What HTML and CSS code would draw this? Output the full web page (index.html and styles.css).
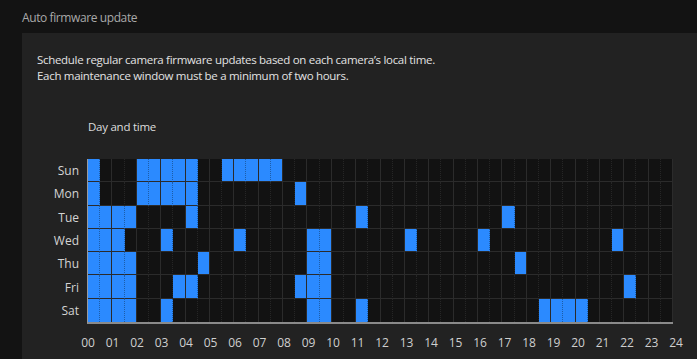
FILE: index.html
```html
<!DOCTYPE html>
<html lang="en">
<head>
    <meta charset="UTF-8">
    <title>Auto firmware update</title>
    <link rel="stylesheet" href="styles.css">
</head>
<body>
    <div class="section-title">Auto firmware update</div>

    <div class="panel">
        <p class="description">
            Schedule regular camera firmware updates based on each camera’s local time.<br>
            Each maintenance window must be a minimum of two hours.
        </p>

        <div class="chart-title">Day and time</div>

        <div class="schedule">
            <div class="day-labels">
                <div>Sun</div>
                <div>Mon</div>
                <div>Tue</div>
                <div>Wed</div>
                <div>Thu</div>
                <div>Fri</div>
                <div>Sat</div>
            </div>
            <div class="grid" id="grid">
                <!-- rows are built by the script below -->
            </div>
        </div>

        <div class="hour-axis" id="hour-axis"></div>
    </div>

    <script>
        // half-hour slots (0 = 00:00-00:30 ... 47 = 23:30-24:00) that are selected
        const windows = [
            [0, 4, 5, 6, 7, 8, 11, 12, 13, 14, 15],          // Sun
            [0, 4, 5, 6, 7, 8, 17],                            // Mon
            [0, 1, 2, 3, 8, 22, 34],                           // Tue
            [0, 1, 2, 6, 12, 18, 19, 26, 32, 43],              // Wed
            [0, 1, 2, 3, 9, 18, 19, 35],                       // Thu
            [0, 1, 2, 3, 7, 8, 17, 18, 19, 44],                // Fri
            [0, 1, 2, 3, 6, 18, 19, 22, 37, 38, 39, 40]        // Sat
        ];

        const grid = document.getElementById('grid');
        windows.forEach((slots) => {
            const row = document.createElement('div');
            row.className = 'grid-row';
            for (let i = 0; i < 48; i++) {
                const cell = document.createElement('div');
                cell.className = 'slot' + (i % 2 === 0 ? ' half' : ' hour');
                if (slots.includes(i)) cell.classList.add('on');
                row.appendChild(cell);
            }
            grid.appendChild(row);
        });

        const axis = document.getElementById('hour-axis');
        for (let h = 0; h <= 24; h++) {
            const label = document.createElement('span');
            label.textContent = String(h).padStart(2, '0');
            axis.appendChild(label);
        }
    </script>
</body>
</html>
```

FILE: styles.css
```css
body {
    margin: 0;
    background: #131313;
    font-family: "Open Sans", "Noto Sans", sans-serif;
    color: #e4e4e4;
    overflow: hidden;
}

.section-title {
    height: 33px;
    line-height: 36px;
    padding-left: 22px;
    font-size: 12px;
    letter-spacing: -0.4px;
    color: #a9a9a9;
}

/* Main panel */
.panel {
    margin-left: 22px;
    background: #222222;
    padding: 19px 0 20px 15px;
}

.description {
    margin: 0;
    font-size: 11.5px;
    letter-spacing: -0.3px;
    line-height: 16px;
    color: #e2e2e2;
}

.chart-title {
    margin-top: 35px;
    margin-left: 51px;
    font-size: 11.5px;
    letter-spacing: -0.25px;
    line-height: 16px;
    color: #dddddd;
}

/* Schedule grid */
.schedule {
    display: flex;
    margin-top: 24px;
    gap: 9px;
}

.day-labels {
    width: 42px;
    display: grid;
    grid-template-rows: repeat(7, 1fr);
    height: 163px;
    font-size: 12px;
    color: #d4d4d4;
}

.day-labels div {
    display: flex;
    align-items: center;
    justify-content: flex-end;
}

.grid {
    width: 585px;
    height: 163px;
    display: grid;
    grid-template-rows: repeat(7, 1fr);
    background: #121212;
    border-left: 1px solid #9a9a9a;
    border-bottom: 2px solid #8a8a8a;
    margin-left: -1px;
}

.grid-row {
    display: grid;
    grid-template-columns: repeat(48, 1fr);
}

.slot {
    border-bottom: 1px solid #2b2b2b;
}

.grid-row:last-child .slot {
    border-bottom: none;
}

.slot.half {
    border-right: 1px dotted #262626;
}

.slot.hour {
    border-right: 1px solid #2b2b2b;
}

.slot.on {
    background: #2b8aff;
}

.slot.on.half {
    border-right-color: #1d5da8;
}

/* Hour labels */
.hour-axis {
    display: grid;
    grid-template-columns: repeat(25, 24.5px);
    margin-top: 11px;
    margin-left: 38.75px;
    font-size: 12px;
    line-height: 16px;
    color: #cfcfcf;
    text-align: center;
}
```
